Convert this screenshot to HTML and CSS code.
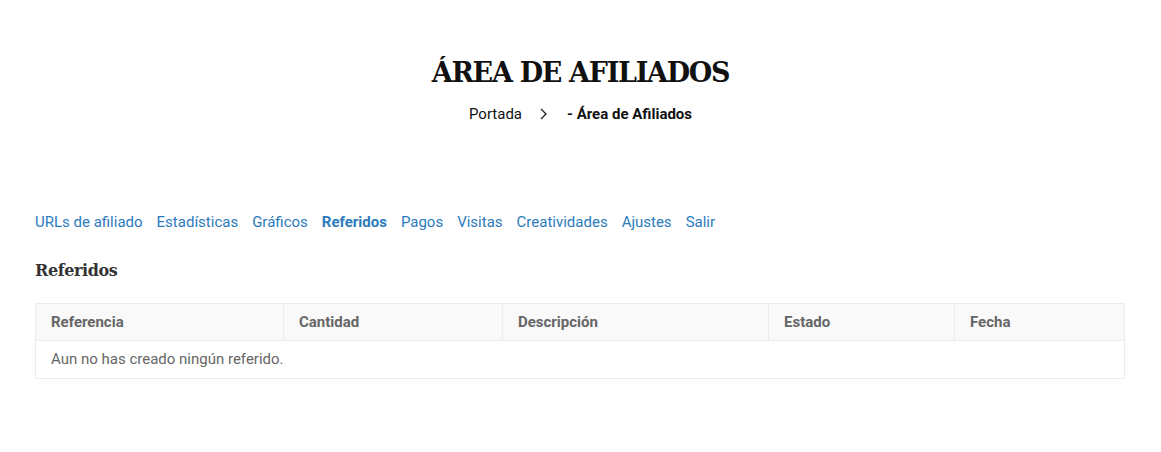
FILE: index.html
```html
<!DOCTYPE html>
<html lang="es">
<head>
    <meta charset="UTF-8">
    <meta name="viewport" content="width=device-width, initial-scale=1.0">
    <title>Área de Afiliados</title>
    <link rel="stylesheet" href="styles.css">
</head>
<body>

    <!-- Cabecera de página -->
    <header class="page-header">
        <h1>ÁREA DE AFILIADOS</h1>
        <div class="breadcrumb">
            <a href="#">Portada</a>
            <svg class="crumb-sep" width="10" height="14" viewBox="0 0 10 14">
                <path d="M3 2 L8 7 L3 12" fill="none" stroke="#222" stroke-width="1.3"/>
            </svg>
            <span class="current">- Área de Afiliados</span>
        </div>
    </header>

    <!-- Área de afiliados -->
    <main class="affiliate-area">
        <nav class="tabs">
            <a href="#">URLs de afiliado</a>
            <a href="#">Estadísticas</a>
            <a href="#">Gráficos</a>
            <a href="#" class="active">Referidos</a>
            <a href="#">Pagos</a>
            <a href="#">Visitas</a>
            <a href="#">Creatividades</a>
            <a href="#">Ajustes</a>
            <a href="#">Salir</a>
        </nav>

        <h2>Referidos</h2>

        <table class="referrals">
            <colgroup>
                <col class="c1">
                <col class="c2">
                <col class="c3">
                <col class="c4">
                <col class="c5">
            </colgroup>
            <thead>
                <tr>
                    <th>Referencia</th>
                    <th>Cantidad</th>
                    <th>Descripción</th>
                    <th>Estado</th>
                    <th>Fecha</th>
                </tr>
            </thead>
            <tbody>
                <tr>
                    <td colspan="5">Aun no has creado ningún referido.</td>
                </tr>
            </tbody>
        </table>
    </main>

</body>
</html>
```

FILE: styles.css
```css
/* Generales */
body {
    margin: 0;
    padding: 0;
    background: #fff;
    font-family: Roboto, "Liberation Sans", sans-serif;
    font-size: 15px;
    color: #222;
}

a {
    text-decoration: none;
}

/* Cabecera */
.page-header {
    text-align: center;
    padding-top: 56px;
}

.page-header h1 {
    margin: 0;
    font-family: "DejaVu Serif", "Liberation Serif", serif;
    font-size: 27px;
    font-weight: bold;
    letter-spacing: -1.3px;
    line-height: 34px;
    color: #111;
}

.breadcrumb {
    display: flex;
    justify-content: center;
    align-items: center;
    margin-top: 14px;
    line-height: 20px;
}

.breadcrumb a {
    color: #111;
}

.crumb-sep {
    margin: 0 19px 0 16px;
}

.breadcrumb .current {
    font-weight: bold;
    color: #111;
}

/* Contenido */
.affiliate-area {
    padding: 88px 36px 0 35px;
}

.tabs {
    display: flex;
    gap: 14px;
    line-height: 20px;
}

.tabs a {
    color: #2b7bbd;
}

.tabs a.active {
    font-weight: bold;
}

.affiliate-area h2 {
    margin: 28px 0 21px;
    font-family: "DejaVu Serif", "Liberation Serif", serif;
    font-size: 16px;
    font-weight: bold;
    letter-spacing: -0.4px;
    line-height: 22px;
    color: #333;
}

/* Tabla */
.referrals {
    width: 100%;
    border-collapse: collapse;
    table-layout: fixed;
    border: 1px solid #ececec;
}

.referrals .c1 { width: 248px; }
.referrals .c2 { width: 219px; }
.referrals .c3 { width: 266px; }
.referrals .c4 { width: 186px; }
.referrals .c5 { width: auto; }

.referrals th,
.referrals td {
    text-align: left;
    padding: 8px 15px;
    line-height: 20px;
    color: #666;
}

.referrals th {
    background: #f9f9f9;
    font-weight: bold;
    border-left: 1px solid #ececec;
    border-bottom: 1px solid #ececec;
}

.referrals td {
    padding: 8px 15px 9px;
}
```
